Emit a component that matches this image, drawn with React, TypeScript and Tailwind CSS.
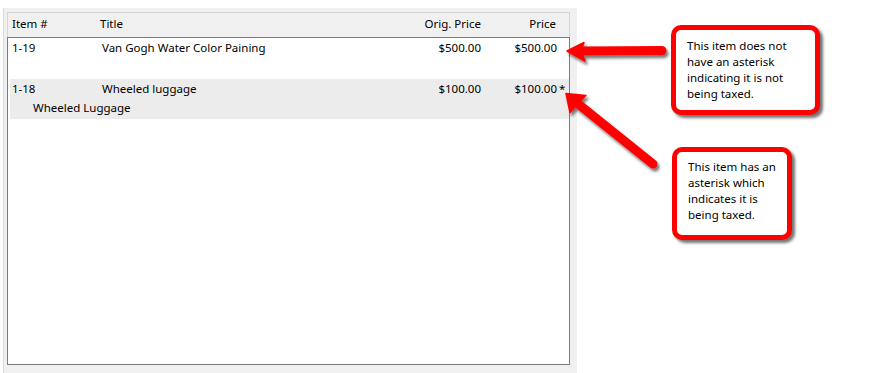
import React from "react";

const font = { fontFamily: '"Noto Sans", "Open Sans", sans-serif' };

function Arrows() {
  return (
    <svg
      className="absolute left-0 top-0 pointer-events-none"
      width={869}
      height={373}
      viewBox="0 0 869 373"
    >
      <defs>
        <filter id="sh" x="-20%" y="-20%" width="140%" height="140%">
          <feDropShadow dx="2" dy="3" stdDeviation="1.4" floodColor="#000" floodOpacity="0.55" />
        </filter>
      </defs>
      <g filter="url(#sh)" fill="#ff0000" stroke="#ff0000">
        <line x1="580" y1="51" x2="662" y2="50.5" strokeWidth="9" strokeLinecap="round" />
        <polygon points="567,51 584,42.5 581,51 585,61" strokeWidth="1.5" strokeLinejoin="round" />
        <line x1="577" y1="103" x2="653" y2="164" strokeWidth="9" strokeLinecap="round" />
        <polygon points="566,93.5 586,95.5 578,103 570,112.5" strokeWidth="1.5" strokeLinejoin="round" />
      </g>
    </svg>
  );
}

export default function App() {
  return (
    <div className="relative w-[869px] h-[373px] bg-white overflow-hidden text-[11.5px] leading-[16px] text-black" style={font}>
      <div className="ml-[3px] pt-[8px]">
        <div className="w-[574px] h-[365px] bg-[#f0f0f0] border-l border-[#dadada] pl-[3px] pt-[4px]">
          {/* header */}
          <div className="w-[563px] h-[25px] border-t border-l border-r border-[#d5d5d5] flex pl-[4px] pr-[13px] pt-[3px]">
            <div className="w-[88px]">Item #</div>
            <div className="flex-1">Title</div>
            <div className="text-right">Orig. Price</div>
            <div className="w-[75px] text-right">Price</div>
          </div>
          {/* list */}
          <div className="w-[563px] h-[328px] border border-[#7c7c7c] bg-white pl-[2px]">
            <div className="h-[41px] flex pl-[2px] pr-[12px] pt-[2px]">
              <div className="w-[90px]">1-19</div>
              <div className="flex-1">Van Gogh Water Color Paining</div>
              <div className="text-right">$500.00</div>
              <div className="w-[76px] text-right">$500.00</div>
            </div>
            <div className="h-[40px] bg-[#ececec] pl-[2px] pr-[12px] pt-[2px]">
              <div className="flex">
                <div className="w-[90px]">1-18</div>
                <div className="flex-1">Wheeled luggage</div>
                <div className="text-right">$100.00</div>
                <div className="w-[76px] text-right relative">
                  $100.00
                  <span className="absolute left-full top-0 pl-[2px]">*</span>
                </div>
              </div>
              <div className="ml-[21px] mt-[3px]">Wheeled Luggage</div>
            </div>
          </div>
        </div>
      </div>

      <Arrows />

      <div className="absolute left-[671px] top-[25px] w-[149px] h-[90px] border-[5px] border-[#ff0000] rounded-[10px] bg-white pl-[11px] pt-[8px] shadow-[3px_3px_3px_rgba(0,0,0,0.55)]">
        <div>This item does not</div>
        <div>have an asterisk</div>
        <div>indicating it is not</div>
        <div>being taxed.</div>
      </div>

      <div className="absolute left-[672px] top-[147px] w-[120px] h-[93px] border-[5px] border-[#ff0000] rounded-[10px] bg-white pl-[11px] pt-[7px] shadow-[3px_3px_3px_rgba(0,0,0,0.55)]">
        <div>This item has an</div>
        <div>asterisk which</div>
        <div>indicates it is</div>
        <div>being taxed.</div>
      </div>
    </div>
  );
}
